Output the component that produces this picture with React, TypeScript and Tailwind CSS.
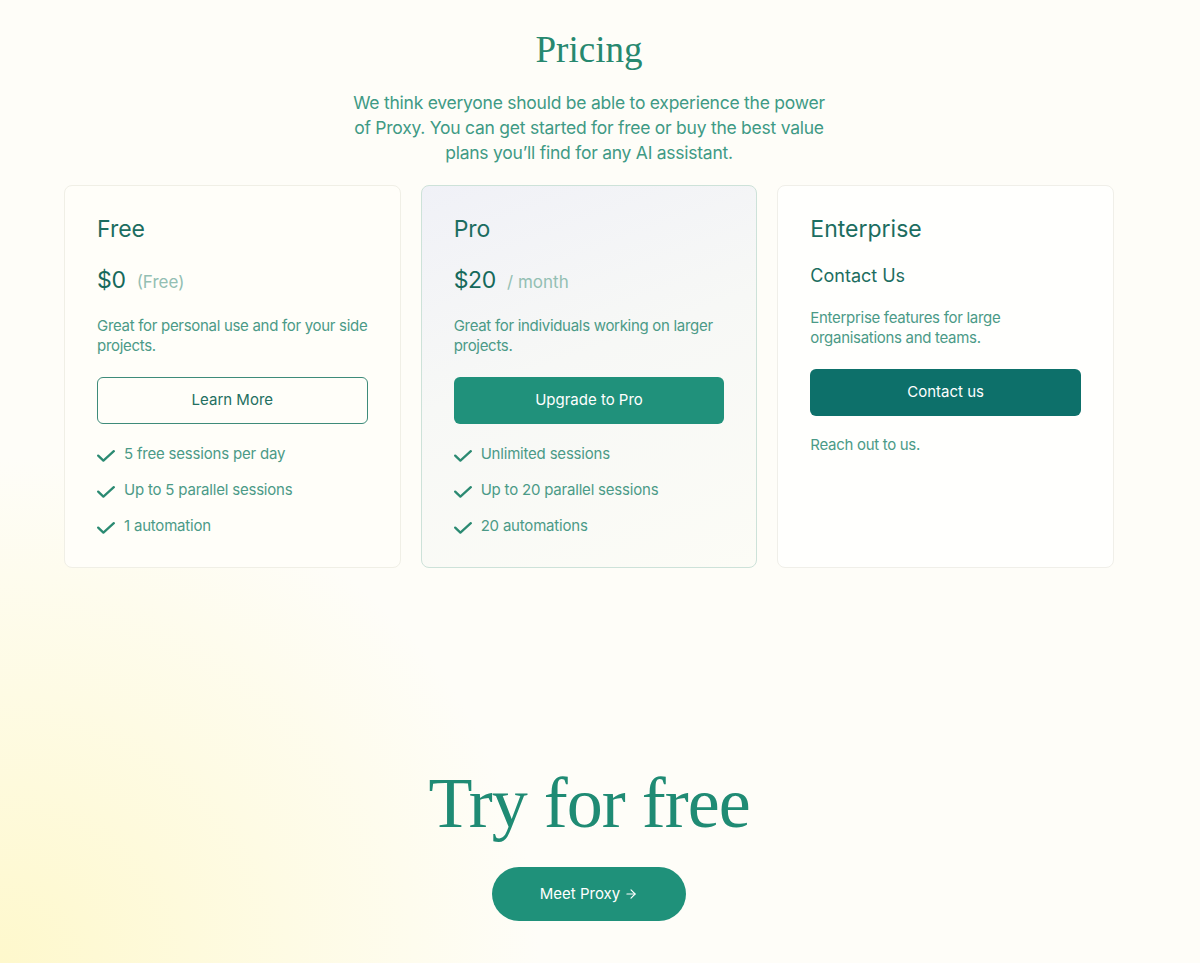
import { ArrowRight } from "lucide-react"

const sans = "font-['Inter','Liberation_Sans',sans-serif]"
const serif = "font-['Liberation_Serif','DejaVu_Serif',serif]"

type Plan = {
	name: string
	price?: string
	note?: string
	contact?: string
	desc: string
	button: string
	variant: "outline" | "solid" | "dark"
	features?: string[]
	footer?: string
	highlight?: boolean
}

const plans: Plan[] = [
	{
		name: "Free",
		price: "$0",
		note: "(Free)",
		desc: "Great for personal use and for your side projects.",
		button: "Learn More",
		variant: "outline",
		features: ["5 free sessions per day", "Up to 5 parallel sessions", "1 automation"],
	},
	{
		name: "Pro",
		price: "$20",
		note: "/ month",
		desc: "Great for individuals working on larger projects.",
		button: "Upgrade to Pro",
		variant: "solid",
		features: ["Unlimited sessions", "Up to 20 parallel sessions", "20 automations"],
		highlight: true,
	},
	{
		name: "Enterprise",
		contact: "Contact Us",
		desc: "Enterprise features for large organisations and teams.",
		button: "Contact us",
		variant: "dark",
		footer: "Reach out to us.",
	},
]

const CheckMark = () => (
	<svg className="h-[12px] w-[18px] shrink-0 translate-y-[2px]" fill="none" viewBox="0 0 18 12">
		<path d="M1.2 5.6 L6.4 10.6 L16.8 1.2" stroke="#2b8a72" strokeLinecap="round" strokeLinejoin="round" strokeWidth={2.3} />
	</svg>
)

const PlanCard = ({ plan }: { plan: Plan }) => {
	return (
		<div
			className={
				plan.highlight
					? "rounded-lg border border-[#cde2d9] bg-[linear-gradient(160deg,#f0f1f7_0%,#f7f8f6_45%,#fcfcf6_100%)] px-8 pt-[27px] pb-[31px]"
					: plan.variant === "dark"
						? "rounded-lg border border-[#f0efe9] bg-[#fffffd] px-8 pt-[27px] pb-[31px]"
						: "rounded-lg border border-[#f0efe6] bg-[#fffef9] px-8 pt-[27px] pb-[31px]"
			}
		>
			{/* TITLE */}
			<h3 className="text-[23px] leading-8 text-[#1c6d60]">{plan.name}</h3>
			{/* PRICE */}
			{plan.price ? (
				<div className="mt-[19px] flex items-baseline gap-[11px]">
					<span className="text-[23px] leading-8 tracking-[-0.3px] text-[#16695b]">{plan.price}</span>
					<span className="text-[17px] text-[#93bfb3]">{plan.note}</span>
				</div>
			) : (
				<div className="mt-[17px] text-[18px] leading-7 text-[#1c6d60]">{plan.contact}</div>
			)}
			{/* DESC */}
			<p
				className={
					plan.price
						? "mt-[20px] text-[15px] leading-5 tracking-[-0.3px] text-[#4b9a87]"
						: "mt-[18px] text-[15px] leading-5 tracking-[-0.3px] text-[#4b9a87]"
				}
			>
				{plan.desc}
			</p>
			{/* BUTTON */}
			<button
				className={
					plan.variant === "outline"
						? "mt-[21px] flex h-[47px] w-full items-center justify-center rounded-md border border-[#3e8b7a] text-[15px] text-[#236f61]"
						: plan.variant === "solid"
							? "mt-[21px] flex h-[47px] w-full items-center justify-center rounded-md bg-[#20917b] text-[15px] text-white"
							: "mt-[21px] flex h-[47px] w-full items-center justify-center rounded-md bg-[#0d706a] text-[15px] text-white"
				}
			>
				{plan.button}
			</button>
			{/* FEATURES */}
			{plan.features && (
				<ul className="mt-[20px] flex flex-col gap-4">
					{plan.features.map((f) => (
						<li className="flex items-center gap-[9px] text-[15px] leading-5 tracking-[-0.2px] text-[#4b9a87]" key={f}>
							<CheckMark />
							{f}
						</li>
					))}
				</ul>
			)}
			{plan.footer && (
				<p className="mt-[19px] text-[15px] leading-5 tracking-[-0.3px] text-[#4b9a87]">{plan.footer}</p>
			)}
		</div>
	)
}

export default function App() {
	return (
		<div
			className={`${sans} min-h-[963px] w-full bg-[#fefdf8] bg-[radial-gradient(ellipse_60%_70%_at_0%_100%,#fef8cc_0%,#fefbe4_40%,transparent_75%)] pr-[22px]`}
		>
			<div className="mx-auto flex w-[1050px] flex-col items-center pt-[28px]">
				{/* HEADER */}
				<h2 className={`${serif} text-[37px] leading-[44px] text-[#27886f]`}>Pricing</h2>
				<p className="mt-[18px] w-[490px] text-center text-[17.5px] leading-[25px] tracking-[-0.25px] text-[#3f9a85]">
					We think everyone should be able to experience the power of Proxy. You can get started for free or buy the best value plans you’ll find for any AI assistant.
				</p>
				{/* PLANS */}
				<div className="mt-[20px] grid w-full grid-cols-3 items-stretch gap-5">
					{plans.map((p) => (
						<PlanCard key={p.name} plan={p} />
					))}
				</div>
				{/* CTA */}
				<h2 className={`${serif} mt-[190px] text-[72px] leading-[90px] tracking-[-1px] text-[#1f8b74]`}>
					Try for free
				</h2>
				<button className="mt-[19px] flex h-[54px] w-[194px] items-center justify-center gap-1 rounded-full bg-[#1f917a] text-[15px] text-white">
					Meet Proxy
					<ArrowRight className="h-[14px] w-[14px]" strokeWidth={2} />
				</button>
			</div>
		</div>
	)
}
